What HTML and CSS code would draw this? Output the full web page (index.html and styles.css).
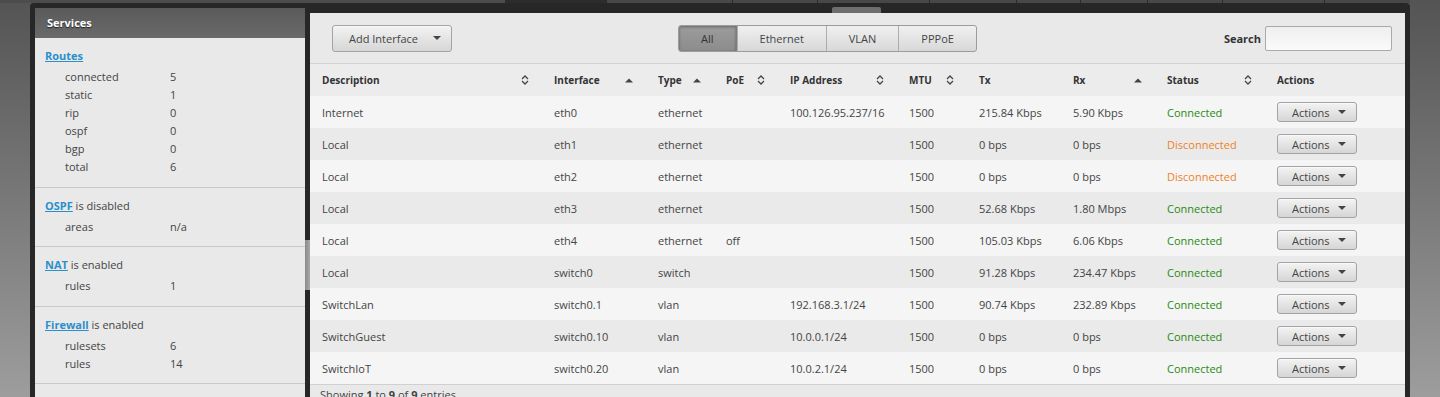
FILE: index.html
```html
<!DOCTYPE html>
<html>
<head>
<meta charset="utf-8">
<title>Interfaces</title>
<link rel="stylesheet" href="styles.css">
</head>
<body>
<div class="topbar">
  <span class="tb tb-lead"></span>
  <span class="tb tb-dark w101"></span>
  <span class="tb w126"></span>
  <span class="tb w85"></span>
  <span class="tb w112"></span>
  <span class="tb w87"></span>
  <span class="tb w64"></span>
  <span class="tb w67"></span>
  <span class="tb w75"></span>
  <span class="tb w102"></span>
  <span class="tb w86"></span>
</div>
<div class="frame">
  <span class="tab-bump"></span>
  <aside class="sidebar">
    <div class="side-head">Services</div>
    <div class="side-body">
      <section class="svc">
        <div class="svc-title"><a href="#">Routes</a></div>
        <div class="kv"><span class="k">connected</span><span>5</span></div>
        <div class="kv"><span class="k">static</span><span>1</span></div>
        <div class="kv"><span class="k">rip</span><span>0</span></div>
        <div class="kv"><span class="k">ospf</span><span>0</span></div>
        <div class="kv"><span class="k">bgp</span><span>0</span></div>
        <div class="kv"><span class="k">total</span><span>6</span></div>
      </section>
      <section class="svc">
        <div class="svc-title"><a href="#">OSPF</a> is disabled</div>
        <div class="kv"><span class="k">areas</span><span>n/a</span></div>
      </section>
      <section class="svc">
        <div class="svc-title"><a href="#">NAT</a> is enabled</div>
        <div class="kv"><span class="k">rules</span><span>1</span></div>
      </section>
      <section class="svc">
        <div class="svc-title"><a href="#">Firewall</a> is enabled</div>
        <div class="kv"><span class="k">rulesets</span><span>6</span></div>
        <div class="kv"><span class="k">rules</span><span>14</span></div>
      </section>
      <section class="svc">
        <div class="svc-title"><a href="#">DHCP</a> is disabled</div>
      </section>
    </div>
    <span class="side-scroll"></span>
  </aside>

  <main class="panel">
    <div class="toolbar">
      <button class="btn btn-add">Add Interface <svg class="caret" width="8" height="4" viewBox="0 0 8 4"><path d="M0 0H8L4 4Z"/></svg></button>
      <div class="seg">
        <span class="seg-item active">All</span>
        <span class="seg-item">Ethernet</span>
        <span class="seg-item">VLAN</span>
        <span class="seg-item">PPPoE</span>
      </div>
      <label class="search">Search <input type="text"></label>
    </div>

    <table class="grid">
      <colgroup>
        <col class="c-desc"><col class="c-if"><col class="c-type"><col class="c-poe"><col class="c-ip"><col class="c-mtu"><col class="c-tx"><col class="c-rx"><col class="c-st"><col class="c-act">
      </colgroup>
      <thead>
        <tr>
          <th><div class="th">Description <svg class="both" width="8" height="10" viewBox="0 0 8 10"><path d="M1 4L4 1L7 4M1 6L4 9L7 6"/></svg></div></th>
          <th><div class="th">Interface <svg class="asc" width="8" height="5" viewBox="0 0 8 5"><path d="M0 4.5L4 0.5L8 4.5Z"/></svg></div></th>
          <th><div class="th">Type <svg class="asc" width="8" height="5" viewBox="0 0 8 5"><path d="M0 4.5L4 0.5L8 4.5Z"/></svg></div></th>
          <th><div class="th">PoE <svg class="both" width="8" height="10" viewBox="0 0 8 10"><path d="M1 4L4 1L7 4M1 6L4 9L7 6"/></svg></div></th>
          <th><div class="th">IP Address <svg class="both" width="8" height="10" viewBox="0 0 8 10"><path d="M1 4L4 1L7 4M1 6L4 9L7 6"/></svg></div></th>
          <th><div class="th">MTU <svg class="both" width="8" height="10" viewBox="0 0 8 10"><path d="M1 4L4 1L7 4M1 6L4 9L7 6"/></svg></div></th>
          <th><div class="th">Tx</div></th>
          <th><div class="th">Rx <svg class="asc" width="8" height="5" viewBox="0 0 8 5"><path d="M0 4.5L4 0.5L8 4.5Z"/></svg></div></th>
          <th><div class="th">Status <svg class="both" width="8" height="10" viewBox="0 0 8 10"><path d="M1 4L4 1L7 4M1 6L4 9L7 6"/></svg></div></th>
          <th><div class="th">Actions</div></th>
        </tr>
      </thead>
      <tbody>
        <tr><td>Internet</td><td>eth0</td><td>ethernet</td><td></td><td>100.126.95.237/16</td><td>1500</td><td>215.84 Kbps</td><td>5.90 Kbps</td><td class="ok">Connected</td><td><button class="btn btn-act">Actions <svg class="caret" width="8" height="4" viewBox="0 0 8 4"><path d="M0 0H8L4 4Z"/></svg></button></td></tr>
        <tr><td>Local</td><td>eth1</td><td>ethernet</td><td></td><td></td><td>1500</td><td>0 bps</td><td>0 bps</td><td class="bad">Disconnected</td><td><button class="btn btn-act">Actions <svg class="caret" width="8" height="4" viewBox="0 0 8 4"><path d="M0 0H8L4 4Z"/></svg></button></td></tr>
        <tr><td>Local</td><td>eth2</td><td>ethernet</td><td></td><td></td><td>1500</td><td>0 bps</td><td>0 bps</td><td class="bad">Disconnected</td><td><button class="btn btn-act">Actions <svg class="caret" width="8" height="4" viewBox="0 0 8 4"><path d="M0 0H8L4 4Z"/></svg></button></td></tr>
        <tr><td>Local</td><td>eth3</td><td>ethernet</td><td></td><td></td><td>1500</td><td>52.68 Kbps</td><td>1.80 Mbps</td><td class="ok">Connected</td><td><button class="btn btn-act">Actions <svg class="caret" width="8" height="4" viewBox="0 0 8 4"><path d="M0 0H8L4 4Z"/></svg></button></td></tr>
        <tr><td>Local</td><td>eth4</td><td>ethernet</td><td>off</td><td></td><td>1500</td><td>105.03 Kbps</td><td>6.06 Kbps</td><td class="ok">Connected</td><td><button class="btn btn-act">Actions <svg class="caret" width="8" height="4" viewBox="0 0 8 4"><path d="M0 0H8L4 4Z"/></svg></button></td></tr>
        <tr><td>Local</td><td>switch0</td><td>switch</td><td></td><td></td><td>1500</td><td>91.28 Kbps</td><td>234.47 Kbps</td><td class="ok">Connected</td><td><button class="btn btn-act">Actions <svg class="caret" width="8" height="4" viewBox="0 0 8 4"><path d="M0 0H8L4 4Z"/></svg></button></td></tr>
        <tr><td>SwitchLan</td><td>switch0.1</td><td>vlan</td><td></td><td>192.168.3.1/24</td><td>1500</td><td>90.74 Kbps</td><td>232.89 Kbps</td><td class="ok">Connected</td><td><button class="btn btn-act">Actions <svg class="caret" width="8" height="4" viewBox="0 0 8 4"><path d="M0 0H8L4 4Z"/></svg></button></td></tr>
        <tr><td>SwitchGuest</td><td>switch0.10</td><td>vlan</td><td></td><td>10.0.0.1/24</td><td>1500</td><td>0 bps</td><td>0 bps</td><td class="ok">Connected</td><td><button class="btn btn-act">Actions <svg class="caret" width="8" height="4" viewBox="0 0 8 4"><path d="M0 0H8L4 4Z"/></svg></button></td></tr>
        <tr><td>SwitchIoT</td><td>switch0.20</td><td>vlan</td><td></td><td>10.0.2.1/24</td><td>1500</td><td>0 bps</td><td>0 bps</td><td class="ok">Connected</td><td><button class="btn btn-act">Actions <svg class="caret" width="8" height="4" viewBox="0 0 8 4"><path d="M0 0H8L4 4Z"/></svg></button></td></tr>
      </tbody>
    </table>
    <div class="footer">Showing <b>1</b> to <b>9</b> of <b>9</b> entries</div>
  </main>
</div>
</body>
</html>
```

FILE: styles.css
```css
* { box-sizing: border-box; }
html, body { margin: 0; height: 100%; }
body {
  background: linear-gradient(#545454, #9d9d9d);
  font-family: "Open Sans", "DejaVu Sans", sans-serif;
  font-size: 11px;
  color: #444;
  overflow: hidden;
}

/* top nav remnant */
.topbar { height: 3px; display: flex; }
.tb { height: 3px; background: #484848; border-left: 1px solid #2a2a2a; }
.tb-lead { width: 505px; background: #4c4c4c; border-left: 0; }
.tb-dark { background: #2c2c2c; }
.w101 { width: 101px; }
.w126 { width: 126px; }
.w85 { width: 85px; }
.w112 { width: 112px; }
.w87 { width: 87px; }
.w64 { width: 64px; }
.w67 { width: 67px; }
.w75 { width: 75px; }
.w102 { width: 102px; }
.w86 { width: 86px; }

/* dark frame */
.frame {
  position: relative;
  margin-left: 30px;
  width: 1380px;
  height: 394px;
  background: #272727;
  border-radius: 4px 4px 0 0;
  display: flex;
  gap: 5px;
  padding: 5px 5px 0;
  align-items: flex-start;
  overflow: hidden;
}
.tab-bump {
  position: absolute;
  left: 802px;
  top: 4px;
  width: 49px;
  height: 6px;
  background: #6e6e6e;
  border-radius: 2px 2px 0 0;
}

/* sidebar */
.sidebar {
  position: relative;
  width: 270px;
  flex: none;
  height: 389px;
  background: #e9e9e9;
}
.side-head {
  height: 30px;
  line-height: 30px;
  padding-left: 12px;
  background: linear-gradient(#5a5a5a, #6a6a6a);
  color: #fff;
  font-weight: bold;
  text-shadow: 0 1px 1px #222;
}
.side-body { padding-top: 0; }
.svc {
  padding: 9px 10px 10.5px;
  border-bottom: 1px solid #c9c9c9;
}
.svc-title { line-height: 18px; margin-bottom: 3px; color: #444; }
.svc-title a { color: #2b8fcc; font-weight: bold; text-decoration: underline; }
.kv { display: flex; line-height: 18px; padding-left: 20px; }
.kv .k { width: 105px; }
.side-scroll {
  position: absolute;
  right: -5px;
  top: 232px;
  width: 5px;
  height: 50px;
  background: linear-gradient(90deg, #8a8a8a, #a8a8a8);
}

/* main panel */
.panel {
  flex: 1;
  margin-top: 5px;
  height: 384px;
  background: #e9e9e9;
}
.toolbar {
  height: 51px;
  display: flex;
  align-items: center;
  padding: 0 13px 0 22px;
  border-bottom: 1px solid #d2d2d2;
}
.btn {
  font-family: inherit;
  font-size: 11px;
  color: #444;
  border: 1px solid #a3a3a3;
  border-radius: 3px;
  background: linear-gradient(#f3f3f3, #d6d6d6);
  display: inline-flex;
  align-items: center;
  justify-content: space-between;
  margin: 0;
  box-shadow: inset 0 1px 0 rgba(255,255,255,.6);
}
.caret { fill: #444; }
.btn-add { width: 120px; height: 27px; padding: 0 10px 0 16px; }
.seg {
  display: flex;
  height: 27px;
  margin-left: 226px;
  border: 1px solid #9c9c9c;
  border-radius: 3px;
  overflow: hidden;
  background: linear-gradient(#f0f0f0, #d8d8d8);
}
.seg-item {
  padding: 0 22px;
  line-height: 25px;
  color: #444;
  border-left: 1px solid #acacac;
}
.seg-item:first-child { border-left: 0; }
.seg-item.active {
  background: linear-gradient(#9c9c9c, #8c8c8c);
  box-shadow: inset 0 1px 3px rgba(0,0,0,.35);
  color: #333;
  border-right: 1px solid #7c7c7c;
}
.search {
  margin-left: auto;
  display: flex;
  align-items: center;
  gap: 4px;
  font-weight: bold;
  color: #333;
}
.search input {
  width: 127px;
  height: 25px;
  margin: 0;
  border: 1px solid #aaa;
  border-radius: 2px;
  background: linear-gradient(#efefef, #fafafa);
}

/* table */
.grid {
  width: 100%;
  border-collapse: collapse;
  table-layout: fixed;
}
.c-desc { width: 232px; }
.c-if { width: 104px; }
.c-type { width: 68px; }
.c-poe { width: 64px; }
.c-ip { width: 119px; }
.c-mtu { width: 70px; }
.c-tx { width: 94px; }
.c-rx { width: 94px; }
.c-st { width: 110px; }
.c-act { width: 140px; }
.grid th {
  height: 32px;
  padding: 0 13px 0 12px;
  background: #ececec;
  text-align: left;
  font-weight: bold;
  font-size: 10px;
  color: #333;
}
.th { display: flex; align-items: center; justify-content: space-between; }
.both { fill: none; stroke: #444; stroke-width: 1.3; }
.asc { fill: #444; }
.grid td {
  height: 32px;
  padding: 0 12px;
  white-space: nowrap;
  color: #444;
}
.grid tbody tr:nth-child(odd) td { background: #f5f5f5; }
.grid tbody tr:nth-child(even) td { background: #eaeaea; }
.grid td.ok { color: #1f8a12; }
.grid td.bad { color: #ef8125; }
.btn-act { width: 80px; height: 20px; padding: 0 10px 0 14px; }
.footer {
  border-top: 1px solid #d0d0d0;
  padding: 1px 10px;
  line-height: 18px;
  color: #444;
}
```
